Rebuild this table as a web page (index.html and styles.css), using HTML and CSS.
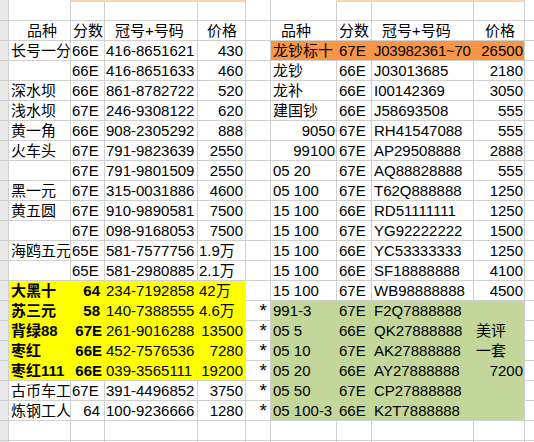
FILE: index.html
```html
<!DOCTYPE html>
<html lang="zh-CN">
<head>
<meta charset="utf-8">
<title>钱币价格表</title>
<link rel="stylesheet" href="styles.css">
</head>
<body>
<div class="sheet">
  <!-- row 0 -->
  <div class="c t0"></div><div class="c t0"></div><div class="c pe"></div><div class="c pe"></div><div class="c pe"></div><div class="c t0"></div><div class="c t0"></div><div class="c pe"></div><div class="c pe"></div><div class="c pe"></div><div class="c t0"></div>
  <!-- header -->
  <div class="c"></div><div class="c pl18">品种</div><div class="c pl2">分数</div><div class="c pl10">冠号+号码</div><div class="c l pl9">价格</div><div class="c"></div><div class="c pl10">品种</div><div class="c">分数</div><div class="c pl10">冠号+号码</div><div class="c l pl11">价格</div><div class="c"></div>
  <!-- r2 -->
  <div class="c"></div><div class="c">长号一分</div><div class="c">66E</div><div class="c">416-8651621</div><div class="c">430</div><div class="c"></div><div class="c o gl">龙钞标十</div><div class="c o">67E</div><div class="c o tight">J03982361~70</div><div class="c o">26500</div><div class="c"></div>
  <!-- r3 -->
  <div class="c"></div><div class="c"></div><div class="c">66E</div><div class="c">416-8651633</div><div class="c">460</div><div class="c"></div><div class="c">龙钞</div><div class="c">66E</div><div class="c">J03013685</div><div class="c">2180</div><div class="c"></div>
  <!-- r4 -->
  <div class="c"></div><div class="c">深水坝</div><div class="c">66E</div><div class="c">861-8782722</div><div class="c">520</div><div class="c"></div><div class="c">龙补</div><div class="c">66E</div><div class="c">I00142369</div><div class="c">3050</div><div class="c"></div>
  <!-- r5 -->
  <div class="c"></div><div class="c">浅水坝</div><div class="c">67E</div><div class="c">246-9308122</div><div class="c">620</div><div class="c"></div><div class="c">建国钞</div><div class="c">66E</div><div class="c">J58693508</div><div class="c">555</div><div class="c"></div>
  <!-- r6 -->
  <div class="c"></div><div class="c">黄一角</div><div class="c">66E</div><div class="c">908-2305292</div><div class="c">888</div><div class="c"></div><div class="c r1">9050</div><div class="c">67E</div><div class="c">RH41547088</div><div class="c">555</div><div class="c"></div>
  <!-- r7 -->
  <div class="c"></div><div class="c">火车头</div><div class="c">67E</div><div class="c">791-9823639</div><div class="c">2550</div><div class="c"></div><div class="c r1">99100</div><div class="c">67E</div><div class="c">AP29508888</div><div class="c">2888</div><div class="c"></div>
  <!-- r8 -->
  <div class="c"></div><div class="c"></div><div class="c">67E</div><div class="c">791-9801509</div><div class="c">2550</div><div class="c"></div><div class="c">05 20</div><div class="c">67E</div><div class="c">AQ88828888</div><div class="c">555</div><div class="c"></div>
  <!-- r9 -->
  <div class="c"></div><div class="c">黑一元</div><div class="c">67E</div><div class="c">315-0031886</div><div class="c">4600</div><div class="c"></div><div class="c">05 100</div><div class="c">67E</div><div class="c">T62Q888888</div><div class="c">1250</div><div class="c"></div>
  <!-- r10 -->
  <div class="c"></div><div class="c">黄五圆</div><div class="c">67E</div><div class="c">910-9890581</div><div class="c">7500</div><div class="c"></div><div class="c">15 100</div><div class="c">66E</div><div class="c">RD51111111</div><div class="c">1250</div><div class="c"></div>
  <!-- r11 -->
  <div class="c"></div><div class="c"></div><div class="c">67E</div><div class="c">098-9168053</div><div class="c">7500</div><div class="c"></div><div class="c">15 100</div><div class="c">67E</div><div class="c">YG92222222</div><div class="c">1500</div><div class="c"></div>
  <!-- r12 -->
  <div class="c"></div><div class="c">海鸥五元</div><div class="c">65E</div><div class="c">581-7577756</div><div class="c l pl1">1.9万</div><div class="c"></div><div class="c">15 100</div><div class="c">66E</div><div class="c">YC53333333</div><div class="c">1250</div><div class="c"></div>
  <!-- r13 -->
  <div class="c"></div><div class="c"></div><div class="c">65E</div><div class="c">581-2980885</div><div class="c l pl1">2.1万</div><div class="c"></div><div class="c">15 100</div><div class="c">66E</div><div class="c">SF18888888</div><div class="c">4100</div><div class="c"></div>
  <!-- r14 -->
  <div class="c"></div><div class="c y b gl gt">大黑十</div><div class="c y b rn gt">64</div><div class="c y gt">234-7192858</div><div class="c y l pl1 gt">42万</div><div class="c yl"></div><div class="c">15 100</div><div class="c">67E</div><div class="c">WB98888888</div><div class="c">4500</div><div class="c"></div>
  <!-- r15 -->
  <div class="c"></div><div class="c y b gl">苏三元</div><div class="c y b rn">58</div><div class="c y">140-7388555</div><div class="c y l pl1">4.6万</div><div class="c yl st">*</div><div class="c g gl gt">991-3</div><div class="c g gt">67E</div><div class="c g gt">F2Q7888888</div><div class="c g gt"></div><div class="c"></div>
  <!-- r16 -->
  <div class="c"></div><div class="c y b gl">背绿88</div><div class="c y b rt">67E</div><div class="c y">261-9016288</div><div class="c y">13500</div><div class="c yl st">*</div><div class="c g gl">05 5</div><div class="c g">66E</div><div class="c g">QK27888888</div><div class="c g l">美评</div><div class="c"></div>
  <!-- r17 -->
  <div class="c"></div><div class="c y b gl">枣红</div><div class="c y b rt">66E</div><div class="c y">452-7576536</div><div class="c y">7280</div><div class="c yl st">*</div><div class="c g gl">05 10</div><div class="c g">67E</div><div class="c g">AK27888888</div><div class="c g l">一套</div><div class="c"></div>
  <!-- r18 -->
  <div class="c"></div><div class="c y b gl">枣红111</div><div class="c y b rt">66E</div><div class="c y">039-3565111</div><div class="c y">19200</div><div class="c yl st">*</div><div class="c g gl">05 20</div><div class="c g">66E</div><div class="c g">AY27888888</div><div class="c g">7200</div><div class="c"></div>
  <!-- r19 -->
  <div class="c"></div><div class="c">古币车工</div><div class="c">67E</div><div class="c">391-4496852</div><div class="c">3750</div><div class="c st">*</div><div class="c g gl">05 50</div><div class="c g">67E</div><div class="c g">CP27888888</div><div class="c g"></div><div class="c"></div>
  <!-- r20 -->
  <div class="c"></div><div class="c">炼钢工人</div><div class="c rn">64</div><div class="c">100-9236666</div><div class="c">1280</div><div class="c st">*</div><div class="c g gl">05 100-3</div><div class="c g">66E</div><div class="c g">K2T7888888</div><div class="c g"></div><div class="c"></div>
  <!-- r21 -->
  <div class="c"></div><div class="c"></div><div class="c"></div><div class="c"></div><div class="c"></div><div class="c"></div><div class="c"></div><div class="c"></div><div class="c"></div><div class="c"></div><div class="c"></div>
  <!-- r22 (partial) -->
  <div class="c"></div><div class="c"></div><div class="c"></div><div class="c"></div><div class="c"></div><div class="c"></div><div class="c"></div><div class="c"></div><div class="c"></div><div class="c"></div><div class="c"></div>
</div>
</body>
</html>
```
FILE: styles.css
```css
html, body {
  margin: 0;
  background: #ffffff;
}

.sheet {
  display: grid;
  grid-template-columns: 8px 62px 34px 93px 48px 25px 66px 35px 102px 51px 10px;
  grid-auto-rows: 20px;
  width: 534px;
  height: 442px;
  overflow: hidden;
  font-family: "Liberation Sans", "Noto Sans CJK SC", sans-serif;
  font-size: 15px;
  line-height: 19px;
  color: #000000;
}

.c {
  box-sizing: border-box;
  border-left: 1px solid #d0d0d0;
  border-top: 1px solid #d0d0d0;
  padding: 0 2px;
  overflow: hidden;
  white-space: nowrap;
}

/* column defaults */
.sheet > .c:nth-child(11n+1) {
  background: #e9e9e9;
  border-left: 0;
  border-top-color: #cfcfcf;
}
.sheet > .c:nth-child(11n+2) { padding-left: 2px; }
.sheet > .c:nth-child(11n+3) { padding-left: 1px; }
.sheet > .c:nth-child(11n+4) { padding-left: 1px; }
.sheet > .c:nth-child(11n+5) { text-align: right; padding-right: 2px; }
.sheet > .c:nth-child(11n+6) { text-align: right; padding-right: 4px; }
.sheet > .c:nth-child(11n+10) { text-align: right; padding-right: 1px; }

/* modifiers */
.sheet .c.l { text-align: left; }
.sheet .c.rn { text-align: right; padding-right: 4px; }
.sheet .c.rt { text-align: right; padding-right: 2px; }
.sheet .c.r1 { text-align: right; padding-right: 1px; }
.sheet .c.pl1 { padding-left: 1px; }
.sheet .c.pl2 { padding-left: 2px; }
.sheet .c.pl9 { padding-left: 9px; }
.sheet .c.pl10 { padding-left: 10px; }
.sheet .c.pl11 { padding-left: 11px; }
.sheet .c.pl18 { padding-left: 18px; }
.sheet .c.st { font-size: 19px; line-height: 20px; padding-right: 3px; }
.b { font-weight: bold; }
.tight { letter-spacing: -0.25px; }

/* top strip */
.sheet .c.t0 { border-top: 0; }
.sheet .c.pe { border-top: 2px solid #fcd5b4; }

/* fills */
.sheet .c.y { background: #ffff00; border-color: #ffff00; }
.sheet .c.yl { border-left-color: #ffff00; }
.sheet .c.o { background: #f79646; border-left-color: #f79646; }
.sheet .c.g { background: #c4d79b; border-color: #c4d79b; }
.sheet .c.gl { border-left-color: #d0d0d0; }
.sheet .c.gt { border-top-color: #d0d0d0; }
```
